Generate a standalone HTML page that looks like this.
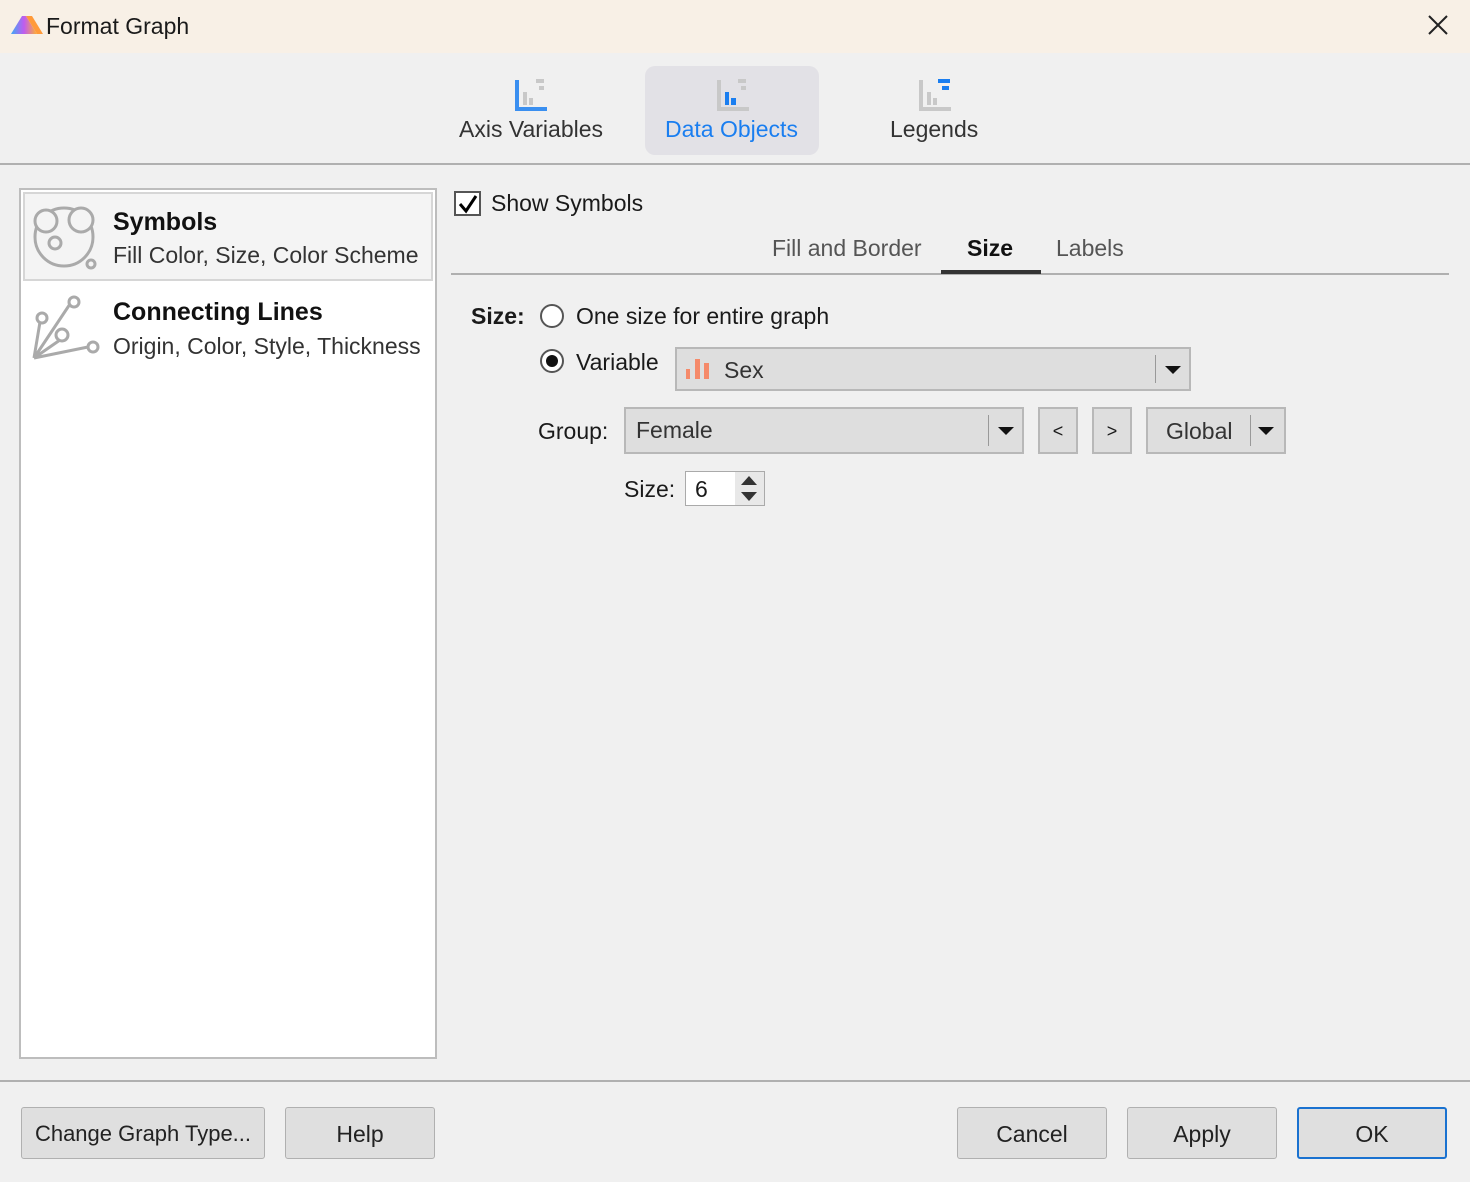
<!DOCTYPE html>
<html><head><meta charset="utf-8"><style>
*{box-sizing:border-box;margin:0;padding:0}
body{width:1470px;height:1182px;background:#f0f0f0;font-family:"Liberation Sans",sans-serif;color:#1a1a1a;position:relative;overflow:hidden;font-size:23px}
.a{position:absolute;white-space:nowrap}
.btn{position:absolute;background:#dfdfdf;border:1px solid #b0b0b0;border-radius:3px;text-align:center;line-height:52px;font-size:23px;color:#222}
.combo{position:absolute;background:#dedede;border:2px solid #b8b8b8}
.arr{position:absolute;width:0;height:0;border-left:8px solid transparent;border-right:8px solid transparent;border-top:8px solid #111}
.sep{position:absolute;width:1px;background:#999}
</style></head><body>
<div class="a" style="left:0;top:0;width:1470px;height:53px;background:#f8f0e6"></div>
<svg class="a" style="left:11px;top:14px" width="32" height="22" viewBox="0 0 32 22"><defs><linearGradient id="g" x1="0" x2="1"><stop offset="0" stop-color="#3fa9f5"/><stop offset=".5" stop-color="#c05cf0"/><stop offset="1" stop-color="#ffb030"/></linearGradient></defs><path d="M0 20 L11 2 L15 2 L26 20 Z" fill="url(#g)"/><path d="M15 2 L21 2 L32 20 L26 20Z" fill="#ff9a3a"/></svg>
<div class="a" style="left:46px;top:13px;font-size:23px">Format Graph</div>
<svg class="a" style="left:1427px;top:14px" width="22" height="22"><path d="M2 2L20 20M20 2L2 20" stroke="#222" stroke-width="2"/></svg>

<div class="a" style="left:645px;top:66px;width:174px;height:89px;background:#e2e1e6;border-radius:10px"></div>
<svg class="a" style="left:514px;top:78px" width="34" height="34"><rect x="1" y="2" width="4" height="31" fill="#3a8ff0"/><rect x="1" y="29" width="32" height="4" fill="#3a8ff0"/><rect x="9" y="14" width="4" height="13" fill="#c8c8c8"/><rect x="15" y="20" width="4" height="7" fill="#c8c8c8"/><rect x="22" y="1" width="8" height="4" fill="#c8c8c8"/><rect x="25" y="8" width="5" height="4" fill="#c8c8c8"/></svg>
<div class="a" style="left:459px;top:116px;font-size:23px;color:#333">Axis Variables</div>
<svg class="a" style="left:716px;top:78px" width="34" height="34"><rect x="1" y="2" width="4" height="31" fill="#c8c8c8"/><rect x="1" y="29" width="32" height="4" fill="#c8c8c8"/><rect x="9" y="14" width="4" height="13" fill="#1a7ef0"/><rect x="15" y="20" width="5" height="7" fill="#1a7ef0"/><rect x="22" y="1" width="8" height="4" fill="#c8c8c8"/><rect x="25" y="8" width="5" height="4" fill="#c8c8c8"/></svg>
<div class="a" style="left:665px;top:116px;font-size:23px;color:#1a7ef0">Data Objects</div>
<svg class="a" style="left:918px;top:78px" width="34" height="34"><rect x="1" y="2" width="4" height="31" fill="#c8c8c8"/><rect x="1" y="29" width="32" height="4" fill="#c8c8c8"/><rect x="9" y="14" width="4" height="13" fill="#c8c8c8"/><rect x="15" y="20" width="4" height="7" fill="#c8c8c8"/><rect x="20" y="1" width="12" height="4" fill="#1a7ef0"/><rect x="24" y="8" width="7" height="4" fill="#1a7ef0"/></svg>
<div class="a" style="left:890px;top:116px;font-size:23px;color:#333">Legends</div>
<div class="a" style="left:0;top:163px;width:1470px;height:2px;background:#b0b0b0"></div>

<div class="a" style="left:19px;top:188px;width:418px;height:871px;background:#fff;border:2px solid #bdbdbd"></div>
<div class="a" style="left:23px;top:192px;width:410px;height:89px;background:#f4f4f4;border:2px solid #d6d6d6"></div>
<svg class="a" style="left:30px;top:202px" width="70" height="70" fill="none" stroke="#aaa" stroke-width="3"><circle cx="34" cy="35" r="29"/><circle cx="16" cy="19" r="11" fill="#f4f4f4"/><circle cx="51" cy="18" r="12" fill="#f4f4f4"/><circle cx="25" cy="41" r="6"/><circle cx="61" cy="62" r="4" fill="#f4f4f4"/></svg>
<div class="a" style="left:113px;top:208px;font-size:25px;font-weight:bold;color:#111">Symbols</div>
<div class="a" style="left:113px;top:242px;font-size:23px;color:#333">Fill Color, Size, Color Scheme</div>
<svg class="a" style="left:30px;top:292px" width="70" height="70" fill="none" stroke="#aaa" stroke-width="3"><path d="M4 66L10 30M4 66L40 12M4 66L30 48M4 66L58 55"/><circle cx="12" cy="26" r="5" fill="#fff"/><circle cx="44" cy="10" r="5" fill="#fff"/><circle cx="32" cy="43" r="6" fill="#fff"/><circle cx="63" cy="55" r="5" fill="#fff"/></svg>
<div class="a" style="left:113px;top:298px;font-size:25px;font-weight:bold;color:#111">Connecting Lines</div>
<div class="a" style="left:113px;top:333px;font-size:23px;color:#333">Origin, Color, Style, Thickness</div>

<div class="a" style="left:454px;top:191px;width:27px;height:25px;background:#fff;border:2px solid #555"></div>
<svg class="a" style="left:457px;top:193px" width="22" height="22"><path d="M3 11L9 18L19 3" fill="none" stroke="#000" stroke-width="3"/></svg>
<div class="a" style="left:491px;top:190px;font-size:23px">Show Symbols</div>
<div class="a" style="left:772px;top:235px;font-size:23px;color:#555">Fill and Border</div>
<div class="a" style="left:967px;top:235px;font-size:23px;font-weight:bold;color:#111">Size</div>
<div class="a" style="left:1056px;top:235px;font-size:23px;color:#555">Labels</div>
<div class="a" style="left:451px;top:273px;width:998px;height:2px;background:#b0b0b0"></div>
<div class="a" style="left:941px;top:270px;width:100px;height:4px;background:#333"></div>

<div class="a" style="left:471px;top:303px;font-size:23px;font-weight:bold">Size:</div>
<div class="a" style="left:540px;top:304px;width:24px;height:24px;border:2px solid #555;border-radius:50%;background:#fff"></div>
<div class="a" style="left:576px;top:303px;font-size:23px">One size for entire graph</div>
<div class="a" style="left:540px;top:349px;width:24px;height:24px;border:2px solid #555;border-radius:50%;background:#fff"></div>
<div class="a" style="left:546px;top:355px;width:12px;height:12px;border-radius:50%;background:#111"></div>
<div class="a" style="left:576px;top:349px;font-size:23px">Variable</div>

<div class="combo" style="left:675px;top:347px;width:516px;height:44px"></div>
<svg class="a" style="left:686px;top:359px" width="28" height="22"><rect x="0" y="10" width="4" height="10" fill="#f58a6a"/><rect x="9" y="0" width="5" height="20" fill="#f58a6a"/><rect x="18" y="4" width="5" height="16" fill="#f58a6a"/></svg>
<div class="a" style="left:724px;top:357px;font-size:23px;color:#333">Sex</div>
<div class="sep" style="left:1155px;top:355px;height:28px"></div>
<div class="arr" style="left:1165px;top:366px"></div>

<div class="a" style="left:538px;top:418px;font-size:23px">Group:</div>
<div class="combo" style="left:624px;top:407px;width:400px;height:47px"></div>
<div class="a" style="left:636px;top:417px;font-size:23px;color:#333">Female</div>
<div class="sep" style="left:988px;top:415px;height:31px"></div>
<div class="arr" style="left:998px;top:427px"></div>
<div class="combo" style="left:1038px;top:407px;width:40px;height:47px;text-align:center;line-height:44px;font-size:18px">&lt;</div>
<div class="combo" style="left:1092px;top:407px;width:40px;height:47px;text-align:center;line-height:44px;font-size:18px">&gt;</div>
<div class="combo" style="left:1146px;top:407px;width:140px;height:47px"></div>
<div class="a" style="left:1166px;top:418px;font-size:23px;color:#333">Global</div>
<div class="sep" style="left:1250px;top:415px;height:31px"></div>
<div class="arr" style="left:1258px;top:427px"></div>

<div class="a" style="left:624px;top:476px;font-size:23px">Size:</div>
<div class="a" style="left:685px;top:471px;width:80px;height:35px;background:#fff;border:1px solid #aaa"></div>
<div class="a" style="left:695px;top:476px;font-size:23px">6</div>
<div class="a" style="left:735px;top:472px;width:29px;height:33px;background:#e8e8e8"></div>
<div class="a" style="left:741px;top:476px;border-left:8px solid transparent;border-right:8px solid transparent;border-bottom:9px solid #333"></div>
<div class="a" style="left:741px;top:492px;border-left:8px solid transparent;border-right:8px solid transparent;border-top:9px solid #333"></div>

<div class="a" style="left:0;top:1080px;width:1470px;height:2px;background:#b0b0b0"></div>
<div class="btn" style="left:21px;top:1107px;width:244px;height:52px;font-size:22px">Change Graph Type...</div>
<div class="btn" style="left:285px;top:1107px;width:150px;height:52px">Help</div>
<div class="btn" style="left:957px;top:1107px;width:150px;height:52px">Cancel</div>
<div class="btn" style="left:1127px;top:1107px;width:150px;height:52px">Apply</div>
<div class="btn" style="left:1297px;top:1107px;width:150px;height:52px;border:2px solid #1a72d0;line-height:50px">OK</div>
</body></html>
